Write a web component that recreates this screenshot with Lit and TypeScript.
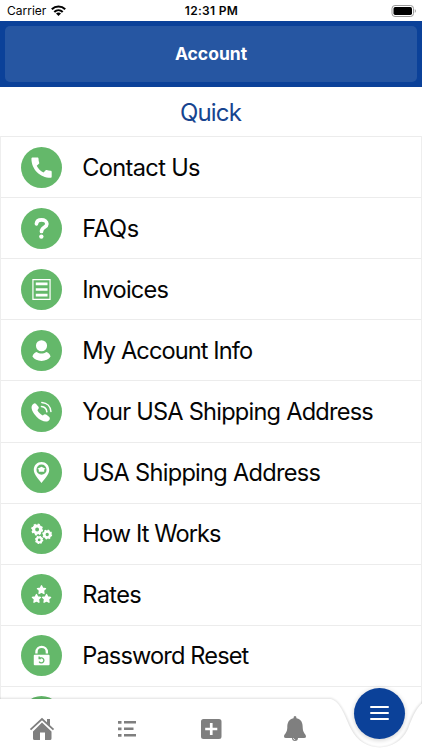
import { LitElement, html, css, svg } from "lit";
import { customElement } from "lit/decorators.js";
import { styleMap } from "lit/directives/style-map.js";

const gear = (x: number, y: number, r: number) => {
  const c = 2 * Math.PI * r;
  return svg`<circle cx=${x} cy=${y} r=${r * 0.7} fill="none" stroke="#fff" stroke-width=${r * 0.62}/>
    <circle cx=${x} cy=${y} r=${r} fill="none" stroke="#fff" stroke-width=${r * 0.36} stroke-dasharray="${c / 16} ${c / 16}"/>`;
};
const star = (x: number, y: number) =>
  svg`<path transform="translate(${x} ${y})" stroke="#fff" stroke-width="4" stroke-linejoin="round" d="M0-12 3.6-4.6 12-3.6 6 2.4 7.4 11 0 7-7.4 11-6 2.4-12-3.6-3.6-4.6Z"/>`;

const icons: Record<string, unknown> = {
  phone: svg`<path transform="translate(21 21.5) scale(3.35)" d="M20 14.700c-1.200 0-2.400-.2-3.500-.6-.4-.1-.8 0-1 .3L13.700 16.300C11.100 15 8.900 12.800 7.700 10.300l2-1.800c.2-.2.3-.6.2-1C9.500 6.400 9.300 5.200 9.300 4c0-.6-.4-1-1-1H4.200C3.600 3 3 3.200 3 4c0 9.300 7.700 17 17 17 .7 0 1-.6 1-1.200v-4.100c0-.6-.4-1-1-1z"/>`,
  question: svg`<path d="M46 47C47 39 53 35.500 61 35.500C70 35.500 77 40 77 47.500C77 58 61 57 61 70" fill="none" stroke="#fff" stroke-width="11" stroke-linecap="round"/><circle cx="60.500" cy="85" r="6.500"/>`,
  invoice: svg`<path d="M35.500 31.500h51v59h-51z" fill="none" stroke="#fff" stroke-width="3.600"/><path d="M44 40h35v8H44zM44 57h35v8H44zM44 74h35v8H44z"/>`,
  user: svg`<circle cx="61" cy="47" r="16.500"/><path d="M34 79C36 71 41 67 47 65.500C55 71.500 67 71.500 75 65.500C81 67 86 71 88 79C82 88 73 92 61 92C49 92 40 88 34 79Z"/>`,
  calling: svg`<path d="M34 41C38 36 42 35 45 39L52 47C55 51 51 54 49 57C53 64 58 69 65 73C69 69 72 68 76 71L84 77C88 81 85 86 81 89C73 94 58 88 47 77C35 65 27 50 34 41Z"/><path d="M61 46C70 47 76 53 77 62M62 34C78 35 88 46 89 61" fill="none" stroke="#fff" stroke-width="4.500" stroke-linecap="round"/>`,
  pin: svg`<path fill-rule="evenodd" d="M61 30C48 30 38 40 38 53C38 68 54 83 61 92C68 83 84 68 84 53C84 40 74 30 61 30ZM61 37.500A15 15 0 1 1 61 67.500A15 15 0 1 1 61 37.500Z"/><path d="M61 44 73 49.500 69 52V59H53V52L49 49.500Z"/>`,
  gears: svg`${gear(48, 49, 15)}${gear(78, 64, 12.5)}${gear(54, 80, 10.5)}`,
  stars: svg`${star(61, 47)}${star(46, 73)}${star(76, 73)}`,
  lock: svg`<path d="M46 55V51A15 15 0 0 1 77 51V55" fill="none" stroke="#fff" stroke-width="7"/><path d="M41 59H82Q85 59 85 62V87Q85 90 82 90H41Q38 90 38 87V62Q38 59 41 59Z"/><path d="M54 68H62A7.500 7.500 0 1 1 54 79M54 64V70H59" fill="none" stroke="#64b86a" stroke-width="4"/>`,
};

const rows: { icon: string; label: string; spacing: number }[] = [
  { icon: "phone", label: "Contact Us", spacing: -0.67 },
  { icon: "question", label: "FAQs", spacing: -0.3 },
  { icon: "invoice", label: "Invoices", spacing: -0.82 },
  { icon: "user", label: "My Account Info", spacing: -0.9 },
  { icon: "calling", label: "Your USA Shipping Address", spacing: -0.78 },
  { icon: "pin", label: "USA Shipping Address", spacing: -0.72 },
  { icon: "gears", label: "How It Works", spacing: -0.9 },
  { icon: "stars", label: "Rates", spacing: -0.65 },
  { icon: "lock", label: "Password Reset", spacing: -0.87 },
  { icon: "", label: "", spacing: 0 },
];

@customElement("app-root")
export class AppRoot extends LitElement {
  static styles = css`
    :host { display: flex; flex-direction: column; position: relative; height: 750px; overflow: hidden; background: #fff; font-family: Inter, "Liberation Sans", sans-serif; color: #050505; }
    .status { height: 20.500px; flex: none; display: grid; grid-template-columns: 1fr auto 1fr; align-items: center; padding: 1px 5px 0 7px; box-sizing: border-box; font-size: 12px; }
    .carrier { display: flex; align-items: center; gap: 5px; letter-spacing: 0; }
    .wifi { width: 15px; height: 11px; margin-top: -1px; }
    .time { font-weight: 600; letter-spacing: 0.3px; position: relative; left: -0.500px; }
    .battery { width: 26px; height: 12px; justify-self: end; }
    .header { height: 66.500px; flex: none; box-sizing: border-box; padding: 5.500px 5px 5px; background: #0b4199; display: flex; }
    .panel { flex: 1; border-radius: 5px; background: #2656a2; color: #fff; display: flex; align-items: center; justify-content: center; font-weight: 700; font-size: 17.500px; padding-bottom: 1px; }
    .title { height: 49.100px; flex: none; display: flex; align-items: center; justify-content: center; color: #16448f; font-size: 24px; letter-spacing: -0.800px; padding: 2px 1px 0 0; box-sizing: border-box; }
    .list { flex: 1; min-height: 0; overflow: hidden; border-left: 1px solid #eee; border-right: 1px solid #eee; }
    .row { height: 61.100px; box-sizing: border-box; border-top: 1.500px solid #ececec; display: flex; align-items: center; gap: 20px; padding-left: 20.300px; }
    .badge { width: 41px; height: 41px; flex: none; fill: #fff; }
    .label { font-size: 23.600px; white-space: nowrap; }
    .nav { position: absolute; left: 0; right: 0; bottom: 0; height: 52px; }
    .shape { position: absolute; left: 0; top: -12px; width: 422px; height: 64px; overflow: visible; }
    .tabs { position: relative; display: grid; grid-template-columns: repeat(5, 1fr); height: 100%; justify-items: center; }
    .tab { width: 28px; height: 28px; margin-top: 17px; fill: #7f7f7f; }
    .fab { width: 51px; height: 51px; border-radius: 50%; background: #0b4199; margin-top: -10.500px; display: flex; flex-direction: column; gap: 4px; align-items: center; justify-content: center; box-shadow: 0 1px 5px #0003; }
    .line { width: 19px; height: 2.200px; border-radius: 1px; background: #fff; }
  `;

  render() {
    return html`
      <div class="status">
        <span class="carrier">Carrier
          <svg class="wifi" viewBox="0 0 15 11" fill="none" stroke="#000" stroke-width="2.100"><path d="M.8 4.200C4.600.5 10.400.5 14.200 4.200M3.300 6.900C5.700 4.600 9.300 4.600 11.700 6.900"/><path d="M5 8.500Q7.500 6.500 10 8.500L7.500 11Z" fill="#000" stroke="none"/></svg>
        </span>
        <span class="time">12:31 PM</span>
        <svg class="battery" viewBox="0 0 26 12"><rect x="1" y=".5" width="21.500" height="11" rx="3" fill="none" stroke="#999"/><rect x="2.500" y="2" width="18.500" height="8" rx="1.700"/><path d="M23.800 4V8Q26 6 23.800 4Z" fill="#999"/></svg>
      </div>
      <div class="header"><div class="panel">Account</div></div>
      <div class="title">Quick</div>
      <div class="list">
        ${rows.map((r) => html`<div class="row">
          <svg class="badge" viewBox="0 0 122 122"><circle cx="61" cy="61" r="61" fill="#64b86a"/>${icons[r.icon] ?? ""}</svg>
          <span class="label" style=${styleMap({ letterSpacing: `${r.spacing}px` })}>${r.label}</span>
        </div>`)}
      </div>
      <div class="nav">
        <svg class="shape" viewBox="0 0 422 64">
          <defs><filter id="soft" x="-5%" y="-20%" width="110%" height="140%"><feGaussianBlur stdDeviation="1.300"/></filter></defs>
          <path d="M-5 12H331C341 15 346 30 352 42C364 68 396 67 407 42C412 29 416 18 428 12V75H-5Z" fill="#000" opacity=".12" filter="url(#soft)"/>
          <path d="M-5 13H331C341 16 345 31 351 43C363 68 397 67 408 43C413 30 417 19 428 13V75H-5Z" fill="#fff"/>
        </svg>
        <div class="tabs">
          <svg class="tab" viewBox="0 0 28 28"><path d="M14 7.500 23.500 16.500V23.500Q23.500 25 22 25H17V17.500H12V25H6.500Q5 25 5 23.500V16.500Z"/><path d="M2.500 14.700 14 4 25.500 14.700" fill="none" stroke="#7f7f7f" stroke-width="1.800"/><path d="M19 4H22V11L19 8Z"/></svg>
          <svg class="tab" viewBox="0 0 28 28"><path d="M5 6H8.500V8.700H5zM5 12.500H8.500V15.200H5zM5 19H8.500V21.700H5zM11 6H23V8.500H11zM11 12.500H20.500V15H11zM11 19H23V21.500H11z"/></svg>
          <svg class="tab" viewBox="0 0 28 28"><path fill-rule="evenodd" d="M6.500 4H22Q24.500 4 24.500 6.500V21.500Q24.500 24 22 24H6.500Q4 24 4 21.500V6.500Q4 4 6.500 4ZM12.900 8V12.700H8.200V15.300H12.900V20H15.600V15.300H20.300V12.700H15.600V8Z"/></svg>
          <svg class="tab" viewBox="0 0 28 28"><path d="M14 1Q15.500 1 15.500 3.200C20.500 4.200 21.700 8 21.700 12.500C21.700 18 25 19 25 21.500Q25 23 23 23H5Q3 23 3 21.500C3 19 6.300 18 6.300 12.500C6.300 8 7.500 4.200 12.500 3.200Q12.500 1 14 1Z"/><path d="M11 23A3 3 0 0 0 17 23Z"/><path d="M12.300 23Q12.500 24.700 14.200 24.700" fill="none" stroke="#fff" stroke-width=".7"/></svg>
          <div class="fab"><div class="line"></div><div class="line"></div><div class="line"></div></div>
        </div>
      </div>
    `;
  }
}
